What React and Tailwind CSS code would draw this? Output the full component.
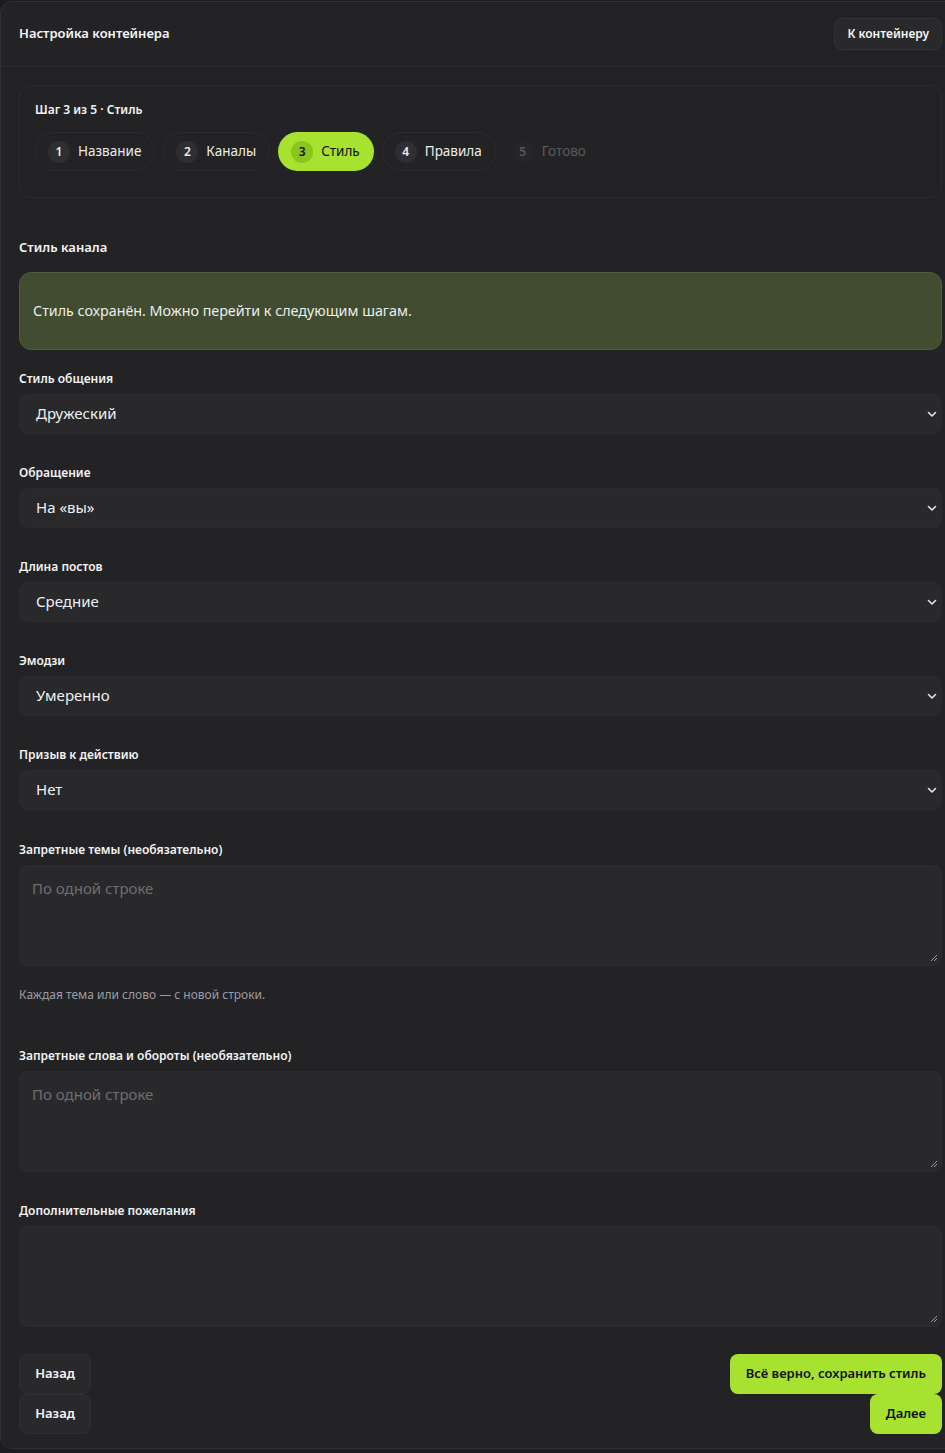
const steps = [
  { n: 1, label: "Название", state: "done" },
  { n: 2, label: "Каналы", state: "done" },
  { n: 3, label: "Стиль", state: "active" },
  { n: 4, label: "Правила", state: "done" },
  { n: 5, label: "Готово", state: "todo" },
];

const selects = [
  { label: "Стиль общения", value: "Дружеский" },
  { label: "Обращение", value: "На «вы»" },
  { label: "Длина постов", value: "Средние" },
  { label: "Эмодзи", value: "Умеренно" },
  { label: "Призыв к действию", value: "Нет" },
];

function Chevron() {
  return (
    <svg width="10" height="10" viewBox="0 0 10 10" className="shrink-0">
      <path d="M1.5 3.5 L5 7 L8.5 3.5" fill="none" stroke="#e5e5e5" strokeWidth="1.6" strokeLinecap="round" strokeLinejoin="round" />
    </svg>
  );
}

function StepPill({ n, label, state }) {
  if (state === "active") {
    return (
      <div className="flex h-[39px] items-center gap-[8px] rounded-full bg-[#a6e22f] pl-[13px] pr-[14px] text-[#111]">
        <span className="flex h-[22px] w-[22px] items-center justify-center rounded-full bg-[#8cc41f] text-[12px] font-semibold">{n}</span>
        <span className="text-[13.5px]">{label}</span>
      </div>
    );
  }
  if (state === "todo") {
    return (
      <div className="flex h-[39px] items-center gap-[8px] pl-[8px] pr-[13px] text-[#5a5a5e]">
        <span className="flex h-[22px] w-[22px] items-center justify-center rounded-full bg-[#262629] text-[12px] font-semibold">{n}</span>
        <span className="text-[13.5px]">{label}</span>
      </div>
    );
  }
  return (
    <div className="flex h-[39px] items-center gap-[8px] rounded-full border border-[#2c2c30] pl-[12px] pr-[13px] text-[#ececec]">
      <span className="flex h-[22px] w-[22px] items-center justify-center rounded-full bg-[#2f2f33] text-[12px] font-semibold">{n}</span>
      <span className="text-[13.5px]">{label}</span>
    </div>
  );
}

function Label({ children }) {
  return <div className="mb-[7px] text-[12px] font-semibold leading-[16px] text-[#f2f2f2]">{children}</div>;
}

function Area({ placeholder }) {
  return (
    <div className="relative h-[101px] rounded-lg border border-[#2c2c30] bg-[#29292c] px-[12px] py-[10px]">
      <span className="text-[15px] text-[#6e6e72]">{placeholder}</span>
      <svg width="8" height="8" viewBox="0 0 8 8" className="absolute bottom-[3px] right-[3px]">
        <path d="M7 1 L1 7 M7 4 L4 7" stroke="#9a9a9a" strokeWidth="1" />
      </svg>
    </div>
  );
}

export default function App() {
  return (
    <div className="min-h-[1453px] bg-[#1d1d20] pt-[1px] font-['Noto_Sans',sans-serif]">
      {/* card wider than the window, clipped on the right */}
      <div className="w-[962px] rounded-xl border border-[#303034] bg-[#232326] pb-[14px]">
        <div className="flex h-[65px] items-center justify-between border-b border-[#2c2c30] pl-[18px] pr-[19px]">
          <div className="text-[13px] font-semibold text-[#f5f5f5]">Настройка контейнера</div>
          <button className="h-[32px] rounded-lg border border-[#333337] bg-[#29292c] px-[12px] text-[12px] font-semibold text-[#f5f5f5]">
            К контейнеру
          </button>
        </div>

        <div className="pl-[18px] pr-[19px]">
          <div className="mt-[18px] rounded-xl border border-[#2c2c30] px-[15px] pb-[26px] pt-[15px]">
            <div className="mb-[13px] text-[12px] font-semibold text-[#f2f2f2]">Шаг 3 из 5 · Стиль</div>
            <div className="flex gap-[8px]">
              {steps.map((s) => (
                <StepPill key={s.n} {...s} />
              ))}
            </div>
          </div>

          <div className="mt-[40px] text-[13px] font-semibold text-[#f2f2f2]">Стиль канала</div>

          <div className="mt-[14px] flex h-[78px] items-center rounded-xl border border-[#4e5c37] bg-[#414c31] px-[13px] text-[14.3px] text-[#ececec]">
            Стиль сохранён. Можно перейти к следующим шагам.
          </div>

          <div className="mt-[21px] flex flex-col gap-[31px]">
            {selects.map((f) => (
              <div key={f.label}>
                <Label>{f.label}</Label>
                <div className="flex h-[40px] items-center justify-between rounded-lg border border-[#2a2a2e] bg-[#29292c] pl-[16px] pr-[4px] text-[15px] text-[#f0f0f0]">
                  <span>{f.value}</span>
                  <Chevron />
                </div>
              </div>
            ))}
          </div>

          <div className="mt-[32px]">
            <Label>Запретные темы (необязательно)</Label>
            <Area placeholder="По одной строке" />
            <div className="mt-[20px] text-[12px] text-[#9c9ca0]">Каждая тема или слово — с новой строки.</div>
          </div>

          <div className="mt-[44px]">
            <Label>Запретные слова и обороты (необязательно)</Label>
            <Area placeholder="По одной строке" />
          </div>

          <div className="mt-[31px]">
            <Label>Дополнительные пожелания</Label>
            <Area placeholder="" />
          </div>

          <div className="mt-[27px] flex justify-between">
            <div className="flex flex-col">
              <button className="h-[40px] w-[72px] rounded-lg border border-[#2e2e32] bg-[#29292c] text-[13px] font-semibold text-[#f5f5f5]">Назад</button>
              <button className="h-[40px] w-[72px] rounded-lg border border-[#2e2e32] bg-[#29292c] text-[13px] font-semibold text-[#f5f5f5]">Назад</button>
            </div>
            <div className="flex flex-col items-end">
              <button className="h-[40px] rounded-lg bg-[#a6e22f] px-[16px] text-[13px] font-semibold text-[#111]">Всё верно, сохранить стиль</button>
              <button className="h-[40px] rounded-lg bg-[#a6e22f] px-[16px] text-[13px] font-semibold text-[#111]">Далее</button>
            </div>
          </div>
        </div>
      </div>
    </div>
  );
}
